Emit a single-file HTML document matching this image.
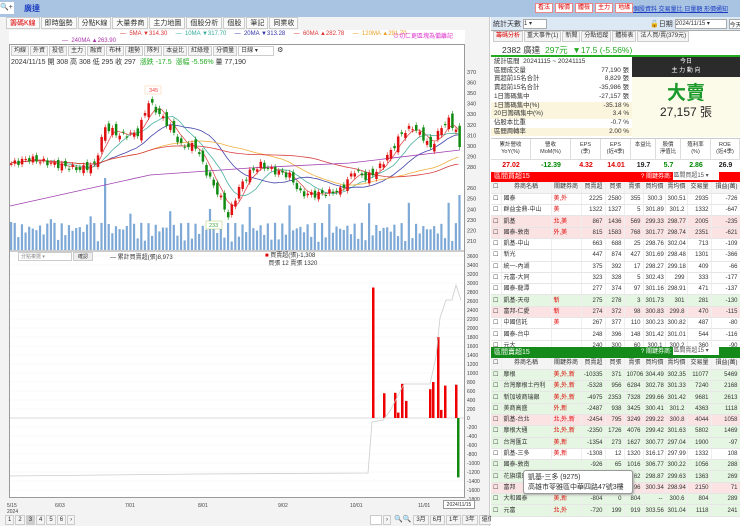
<!DOCTYPE html>
<html><head><meta charset="utf-8">
<style>
*{margin:0;padding:0;box-sizing:border-box}
body{width:740px;height:526px;overflow:hidden;background:#fff;font-family:"Liberation Sans","Noto Sans CJK TC",sans-serif;font-size:7px;color:#333;position:relative}
.a{position:absolute}
.tab{display:inline-block;border:1px solid #ccc;background:#fafafa;padding:0 3px;height:12px;line-height:11px;margin-right:1px;font-size:7px}
.btn{display:inline-block;border:1px solid #ccc;background:#f4f4f4;padding:0 2px;height:10px;line-height:9px;margin-right:1px;font-size:6px}
table{border-collapse:collapse;font-size:6px;table-layout:fixed}
td{height:11.3px;line-height:10px;border-bottom:1px solid #e6e6e6;border-right:1px solid #eee;padding:0 2px;text-align:right;white-space:nowrap;overflow:hidden}
td.l{text-align:left}
.rb{display:inline-block;border:1px solid #e88;color:#d00;background:#fff;font-size:6px;padding:0 2px;height:10px;line-height:9px;margin-left:2px}
</style></head><body>
<div class="a" style="left:0;top:0;width:740px;height:17px;background:#a9c3e3"></div>
<div class="a" style="left:0;top:2px;width:14px;height:12px;background:#fff;font-size:7px;line-height:12px">🔍+</div>
<div class="a" style="left:24px;top:3px;font-size:8px;color:#1a3cc0;font-weight:bold">廣達</div>
<div class="a" style="left:533px;top:3px;white-space:nowrap"><span class="rb">看法</span><span class="rb">報價</span><span class="rb">體檢</span><span class="rb">主力</span><span class="rb">地緣</span></div>
<div class="a" style="left:633px;top:4px;font-size:6px;color:#1a3cc0;text-decoration:underline;white-space:nowrap">個股資料 交易量比 日量額 形價通知</div>
<div class="a" style="left:0;top:17px;width:490px;height:509px;background:#f3f3f3;border-right:1px solid #ccc"></div>
<div class="a" style="left:6px;top:17px;white-space:nowrap"><span class="tab" style="color:#d00">籌碼K線</span><span class="tab">即時盤勢</span><span class="tab">分點K線</span><span class="tab">大量券商</span><span class="tab">主力地圖</span><span class="tab">個股分析</span><span class="tab">個股</span><span class="tab">筆記</span><span class="tab">同業收</span></div>
<div class="a" style="left:9px;top:30px;width:456px;height:14px;background:#fff"></div>
<div class="a" style="left:120px;top:31px;font-size:6px;white-space:nowrap"><span style="color:#d33">— &nbsp;5MA ▼314.30</span> &nbsp;&nbsp;&nbsp; <span style="color:#3a9">— &nbsp;10MA ▼317.70</span> &nbsp;&nbsp;&nbsp; <span style="color:#33a">— &nbsp;20MA ▼313.28</span> &nbsp;&nbsp;&nbsp; <span style="color:#d33">— &nbsp;60MA ▲282.78</span> &nbsp;&nbsp;&nbsp; <span style="color:#e9a020">— &nbsp;120MA ▲291.70</span></div>
<div class="a" style="left:62px;top:38px;font-size:6px;color:#a3a">— &nbsp;240MA ▲263.90</div>
<div class="a" style="left:393px;top:31px;font-size:6px;color:#d3c">⊙切ㄈ更區塊為偏離記</div>
<div class="a" style="left:9px;top:44px;width:456px;height:454px;background:#fff;border:1px solid #999"></div>
<div class="a" style="left:11px;top:46px;white-space:nowrap"><span class="btn">均線</span><span class="btn">外資</span><span class="btn">投信</span><span class="btn">主力</span><span class="btn">融資</span><span class="btn">布林</span><span class="btn">趨勢</span><span class="btn">隊列</span><span class="btn">本益比</span><span class="btn">紅綠燈</span><span class="btn">分價量</span><span class="btn" style="width:36px;background:#fff">日線 ▾</span> ⚙</div>
<div class="a" style="left:11px;top:57px;font-size:7px;white-space:nowrap">2024/11/15 開 308 高 308 低 295 收 297 &nbsp;<span style="color:#2a2">漲跌 -17.5 &nbsp;漲幅 -5.56%</span> 量 77,190</div>
<svg class="a" style="left:0;top:0" width="490" height="526" id="ch"></svg>
<div class="a" style="left:18px;top:252px;width:54px;height:9px;border:1px solid #ccc;background:#fff;font-size:5px;color:#888;line-height:8px;padding-left:2px">分點複選 ▾</div>
<div class="a" style="left:73px;top:252px;width:20px;height:9px;border:1px solid #ccc;background:#eee;font-size:5px;line-height:8px;text-align:center">確認</div>
<div class="a" style="left:110px;top:252px;font-size:6px">— 累計買賣超(張)8,973</div>
<div class="a" style="left:265px;top:252px;font-size:6px;line-height:8px"><span style="color:#d00">■</span> 買賣超(張)-1,308<br>&nbsp;&nbsp;買張 12 賣張 1320</div>
<div class="a" style="left:443px;top:500px;width:32px;height:9px;border:1px solid #999;background:#fff;font-size:5px;line-height:8px;text-align:center">2024/11/15</div>
<div class="a" style="left:5px;top:515px;white-space:nowrap"><span class="btn">1</span><span class="btn">2</span><span class="btn" style="background:#ccc">3</span><span class="btn">4</span><span class="btn">5</span><span class="btn">6</span><span class="btn">›</span></div>
<div class="a" style="left:370px;top:515px;white-space:nowrap"><span class="btn" style="width:12px;background:#fff">&nbsp;</span><span class="btn">›</span> 🔍🔍 <span class="btn">3月</span><span class="btn">6月</span><span class="btn">1年</span><span class="btn">3年</span><span class="btn">還價</span></div>
<!-- right -->
<div class="a" style="left:491px;top:17px;width:249px;height:14px;background:#dde8f5;border-bottom:1px solid #aaa"></div>
<div class="a" style="left:493px;top:19px;font-size:7px;white-space:nowrap">統計天數 <span style="display:inline-block;width:24px;height:10px;border:1px solid #aaa;background:#fff;vertical-align:middle;font-size:6px">1 ▾</span></div>
<div class="a" style="left:650px;top:19px;font-size:7px;white-space:nowrap">🔓日期 <span style="display:inline-block;width:52px;height:10px;border:1px solid #aaa;background:#fff;font-size:6px;vertical-align:middle">2024/11/15 ▾</span> <span style="display:inline-block;width:16px;height:10px;border:1px solid #aaa;background:#fff;font-size:6px;vertical-align:middle">今天</span></div>
<div class="a" style="left:493px;top:31px;white-space:nowrap"><span class="btn" style="color:#d00;height:11px;font-size:6px">籌碼分析</span><span class="btn" style="height:11px">重大事件(1)</span><span class="btn" style="height:11px">新聞</span><span class="btn" style="height:11px">分點追蹤</span><span class="btn" style="height:11px">體檢表</span><span class="btn" style="height:11px">法人買/賣(379元)</span></div>
<div class="a" style="left:491px;top:42px;width:249px;height:15px;background:#fff;border-bottom:2px solid #2a2"></div>
<div class="a" style="left:502px;top:44px;font-size:8.5px;white-space:nowrap">2382 廣達 &nbsp;<span style="color:#2a2">297元 &nbsp;▼17.5 (-5.56%)</span></div>
<div class="a" style="left:491px;top:58px;width:141px;height:79px;background:#fff;font-size:6.4px;line-height:8.7px">
<div style="padding-left:3px">統計區間 &nbsp;20241115 ~ 20241115</div>
<div style="padding:0 3px;display:flex;justify-content:space-between"><span>區間成交量</span><span>77,190 張</span></div>
<div style="padding:0 3px;display:flex;justify-content:space-between"><span>買超前15名合計</span><span>8,829 張</span></div>
<div style="padding:0 3px;display:flex;justify-content:space-between"><span>賣超前15名合計</span><span>-35,986 張</span></div>
<div style="padding:0 3px;display:flex;justify-content:space-between"><span>1日籌碼集中</span><span>-27,157 張</span></div>
<div style="padding:0 3px;display:flex;justify-content:space-between;background:#fbf5dd"><span>1日籌碼集中(%)</span><span>-35.18 %</span></div>
<div style="padding:0 3px;display:flex;justify-content:space-between;background:#fbf5dd"><span>20日籌碼集中(%)</span><span>3.4 %</span></div>
<div style="padding:0 3px;display:flex;justify-content:space-between"><span>佔股本比重</span><span>-0.7 %</span></div>
<div style="padding:0 3px;display:flex;justify-content:space-between;background:#fbf5dd"><span>區間周轉率</span><span>2.00 %</span></div>
</div>
<div class="a" style="left:632px;top:57px;width:108px;height:20px;background:#2b2b2b;color:#fff;font-size:6px;text-align:center;line-height:9px;padding-top:1px">今日<br>主 力 動 向</div>
<div class="a" style="left:632px;top:77px;width:108px;height:60px;background:#fcfbea;text-align:center"><div style="font-size:19px;color:#1a9a2a;font-weight:bold;margin-top:6px;line-height:22px">大賣</div><div style="font-size:12px;color:#222;line-height:14px">27,157 張</div></div>
<div class="a" style="left:491px;top:138px;width:249px;height:33px;background:#fff;border-top:1px solid #ccc"></div>
<div class="a" id="fin" style="left:491px;top:139px;width:249px;font-size:5.5px"></div>
<div class="a" style="left:491px;top:172px;width:249px;height:10px;background:#f00;color:#fff;font-size:7px;line-height:10px;padding-left:3px">區間買超15<span style="position:absolute;left:150px;font-size:6px;white-space:nowrap">? 關鍵券商: <span style="display:inline-block;width:46px;height:8px;background:#fff;color:#555;vertical-align:middle;line-height:8px">區間買超15 ▾</span></span></div>
<div class="a" id="t1" style="left:491px;top:182px;width:249px;height:165px;overflow:hidden;background:#fff"></div>
<div class="a" style="left:491px;top:347px;width:249px;height:11px;background:#138a1a;color:#fff;font-size:7px;line-height:11px;padding-left:3px">區間賣超15<span style="position:absolute;left:150px;font-size:6px;white-space:nowrap">? 關鍵券商: <span style="display:inline-block;width:46px;height:8px;background:#fff;color:#555;vertical-align:middle;line-height:8px">區間賣超15 ▾</span></span></div>
<div class="a" id="t2" style="left:491px;top:358px;width:249px;height:168px;overflow:hidden;background:#fff"></div>
<div class="a" style="left:523px;top:470px;width:110px;height:24px;background:#fff;border:1px solid #999;border-radius:3px;font-size:7px;line-height:10px;padding:2px 4px;box-shadow:1px 1px 2px #aaa;white-space:nowrap">凱基-三多 (9275)<br>高雄市苓雅區中華四路47號3樓</div>
<script>
const S=document.getElementById('ch');let h='';
const py=p=>72+(370-p)*1.056;
for(let p=210;p<=370;p+=10){if(p==270)continue;h+=`<text x="467" y="${py(p)+2}" font-size="5.5" fill="#444">${p}</text>`}
const kp=[[0,283],[5,288],[13,282],[19,278],[23,282],[26,318],[30,310],[35,312],[38,342],[41,330],[44,318],[47,300],[51,300],[54,275],[58,250],[60,233],[63,260],[66,275],[69,282],[73,276],[77,272],[80,255],[84,254],[88,256],[91,258],[95,277],[98,270],[101,276],[105,295],[108,312],[111,318],[114,308],[116,298],[119,318],[121,324],[123,315],[124,297]];
const N=125,X0=10,dx=452/N;let cl=[];
for(let i=0;i<N;i++){let k=0;while(k<kp.length-2&&kp[k+1][0]<i)k++;const[a,b]=[kp[k],kp[k+1]];const t=Math.min(1,Math.max(0,(i-a[0])/(b[0]-a[0])));cl.push(a[1]+(b[1]-a[1])*t+Math.sin(i*2.3)*3)}
for(let j=0;j<N;j++){let v=(Math.abs(Math.sin(j*1.7))*0.6+0.25)*32+(j%11==0?20:0);if(j==26)v=72;if(j==N-1)v=55;const x=X0+j*dx;h+=`<rect x="${x}" y="${250-v}" width="2.2" height="${v}" fill="#7ea9d6"/>`}
function ma(n,c){let pts=[];for(let i=0;i<N;i++){let s=0,m=0;for(let j=Math.max(0,i-n+1);j<=i;j++){s+=cl[j];m++}pts.push(`${X0+i*dx},${py(s/m)}`)}h+=`<polyline points="${pts.join(' ')}" fill="none" stroke="${c}" stroke-width=".8"/>`}
ma(5,'#e05050');ma(10,'#4ab0a0');ma(20,'#4444aa');ma(40,'#f0b040');ma(60,'#d84040');
h+=`<polyline points="10,206 150,175 250,168 350,163 460,150" fill="none" stroke="#a040b0" stroke-width=".8"/>`;
for(let i=0;i<N;i++){const o=(i?cl[i-1]:cl[0])+Math.sin(i*3.1)*4,c=cl[i],up=c>=o;const col=up?'#e01010':'#108a10';const x=X0+i*dx;const hi=Math.max(o,c)+2.5,lo=Math.min(o,c)-2.5;h+=`<line x1="${x+1.2}" x2="${x+1.2}" y1="${py(hi)}" y2="${py(lo)}" stroke="${col}" stroke-width=".6"/><rect x="${x}" y="${py(Math.max(o,c))}" width="2.5" height="${Math.max(1,Math.abs(o-c)*1.056)}" fill="${col}"/>`}
h+=`<rect x="145" y="86" width="16" height="8" fill="#fff" stroke="#fc9" stroke-width=".5"/><text x="149" y="92" font-size="5.5" fill="#e44">345</text><rect x="206" y="221" width="16" height="8" fill="#fff" stroke="#ac6" stroke-width=".5"/><text x="209" y="227" font-size="5.5" fill="#4a4">233</text>`;
h+=`<line x1="9" x2="465" y1="251" y2="251" stroke="#999"/>`;
const zy=418,sc=9/200;
for(let v=-1800;v<=3600;v+=200){h+=`<text x="467" y="${zy-v*sc+2}" font-size="5" fill="#444">${v}</text>`;h+=`<line x1="10" x2="464" y1="${zy-v*sc}" y2="${zy-v*sc}" stroke="#f4f4f4" stroke-width=".5"/>`}
h+=`<line x1="10" x2="464" y1="${zy}" y2="${zy}" stroke="#bbb" stroke-width=".6"/>`;
[[372,2900],[383,550],[394,560],[397,120],[401,760],[405,380],[429,640],[432,800],[437,1800],[440,180],[444,720],[455,740]].forEach(([x,v])=>{h+=`<rect x="${x}" y="${zy-v*sc}" width="2.5" height="${v*sc}" fill="#e00"/>`});
h+=`<rect x="457" y="${zy}" width="2.5" height="${1320*sc}" fill="#118a11"/>`;
h+=`<polyline points="10,476 200,474 368,473 372,422 383,420 390,411 404,384 430,384 436,357 440,318 446,300 452,300 456,285 461,300" fill="none" stroke="#ccc" stroke-width=".8"/>`;
[['5/15',7],['6/03',55],['7/01',125],['8/01',198],['9/02',278],['10/01',350],['11/01',418]].forEach(([t,x])=>{h+=`<text x="${x}" y="507" font-size="5" fill="#444">${t}</text>`});
h+=`<text x="7" y="513" font-size="5" fill="#444">2024</text>`;
S.innerHTML=h;
const fh=['累計營收<br>YoY(%)','營收<br>MoM(%)','EPS<br>(季)','EPS<br>(近4季)','本益比','股價<br>淨值比','殖利率<br>(%)','ROE<br>(近4季)'];
const fv=[['27.02','#d00'],['-12.39','#080'],['4.32','#d00'],['14.01','#d00'],['19.7','#222'],['5.7','#080'],['2.86','#080'],['26.9','#222']];
const w=[40,40,30,30,25,25,30,29];
let f='<div style="display:flex;height:20px">';fh.forEach((t,i)=>f+=`<div style="width:${w[i]}px;text-align:center;border-right:1px solid #ddd;line-height:7px;padding-top:3px">${t}</div>`);
f+='</div><div style="display:flex;height:12px;border-top:1px solid #ddd">';fv.forEach((t,i)=>f+=`<div style="width:${w[i]}px;text-align:center;font-weight:bold;font-size:7px;color:${t[1]};line-height:11px">${t[0]}</div>`);
document.getElementById('fin').innerHTML=f+'</div>';
const cw=[10,50,30,24,19,19,22,22,24,29];
function tbl(id,rows){let s='<table style="width:249px"><colgroup>'+cw.map(x=>`<col style="width:${x}px">`).join('')+'</colgroup><tr style="background:#f4f4f4"><td class="l">☐</td><td style="text-align:center">券商名稱</td><td style="text-align:center">關鍵券商</td><td>買賣超</td><td>買張</td><td>賣張</td><td>買均價</td><td>賣均價</td><td>交易量</td><td>損益(萬)</td></tr>';
rows.forEach(r=>{s+=`<tr style="background:${r[9]||'#fff'}"><td class="l">☐</td><td class="l">${r[0]}</td><td class="l" style="color:#d00">${r[1]}</td>`;for(let i=2;i<9;i++)s+=`<td>${r[i]}</td>`;s+='</tr>'});document.getElementById(id).innerHTML=s+'</table>'}
const P='#fbe3e3',G='#e5f6e2';
tbl('t1',[['國泰','美,外',2225,2580,355,300.3,300.51,2935,-726],['群益金鼎-中山','美',1322,1327,5,301.89,301.2,1332,-647],['凱基','北,美',867,1436,569,299.33,298.77,2005,-235,P],['國泰-敦南','外,美',815,1583,768,301.77,298.74,2351,-621,P],['凱基-中山','',663,688,25,298.76,302.04,713,-109],['新光','',447,874,427,301.69,298.48,1301,-366],['統一-內湖','',375,392,17,298.27,299.18,409,-66],['元富-大同','',323,328,5,302.43,299,333,-177],['國泰-龍潭','',277,374,97,301.16,298.91,471,-137],['凱基-天母','新',275,278,3,301.73,301,281,-130,G],['富邦-仁愛','新',274,372,98,300.83,299.8,470,-115,P],['中國信託','美',267,377,110,300.23,300.82,487,-80],['國泰-台中','',248,396,148,301.42,301.01,544,-116],['元大','',240,300,60,300.1,300.2,360,-90]]);
tbl('t2',[['摩根','美,外,新',-10335,371,10706,304.49,302.35,11077,5469,G],['台灣摩根士丹利','美,外,新',-5328,956,6284,302.78,301.33,7240,2168,G],['新加坡商瑞銀','美,外,新',-4975,2353,7328,299.66,301.42,9681,2613,G],['美商高盛','外,新',-2487,938,3425,300.41,301.2,4363,1118,G],['凱基-台北','北,外,新',-2454,795,3249,299.22,300.8,4044,1058,P],['摩根大通','北,外,新',-2350,1726,4076,299.42,301.63,5802,1469,G],['台灣匯立','美,新',-1354,273,1627,300.77,297.04,1900,-97,G],['凱基-三多','美,新',-1308,12,1320,316.17,297.99,1332,108,'#fff'],['國泰-敦南','',-926,65,1016,306.77,300.22,1056,288,G],['花旗環球','',-1096,33,1162,298.87,299.63,1363,269,G],['富邦','',-1000,650,1496,300.34,298.94,2150,71,P],['大和國泰','美,新',-804,0,804,'--',300.6,804,289,G],['元富','北,外',-720,199,919,303.56,301.04,1118,241,G]]);
</script>
</body></html>
